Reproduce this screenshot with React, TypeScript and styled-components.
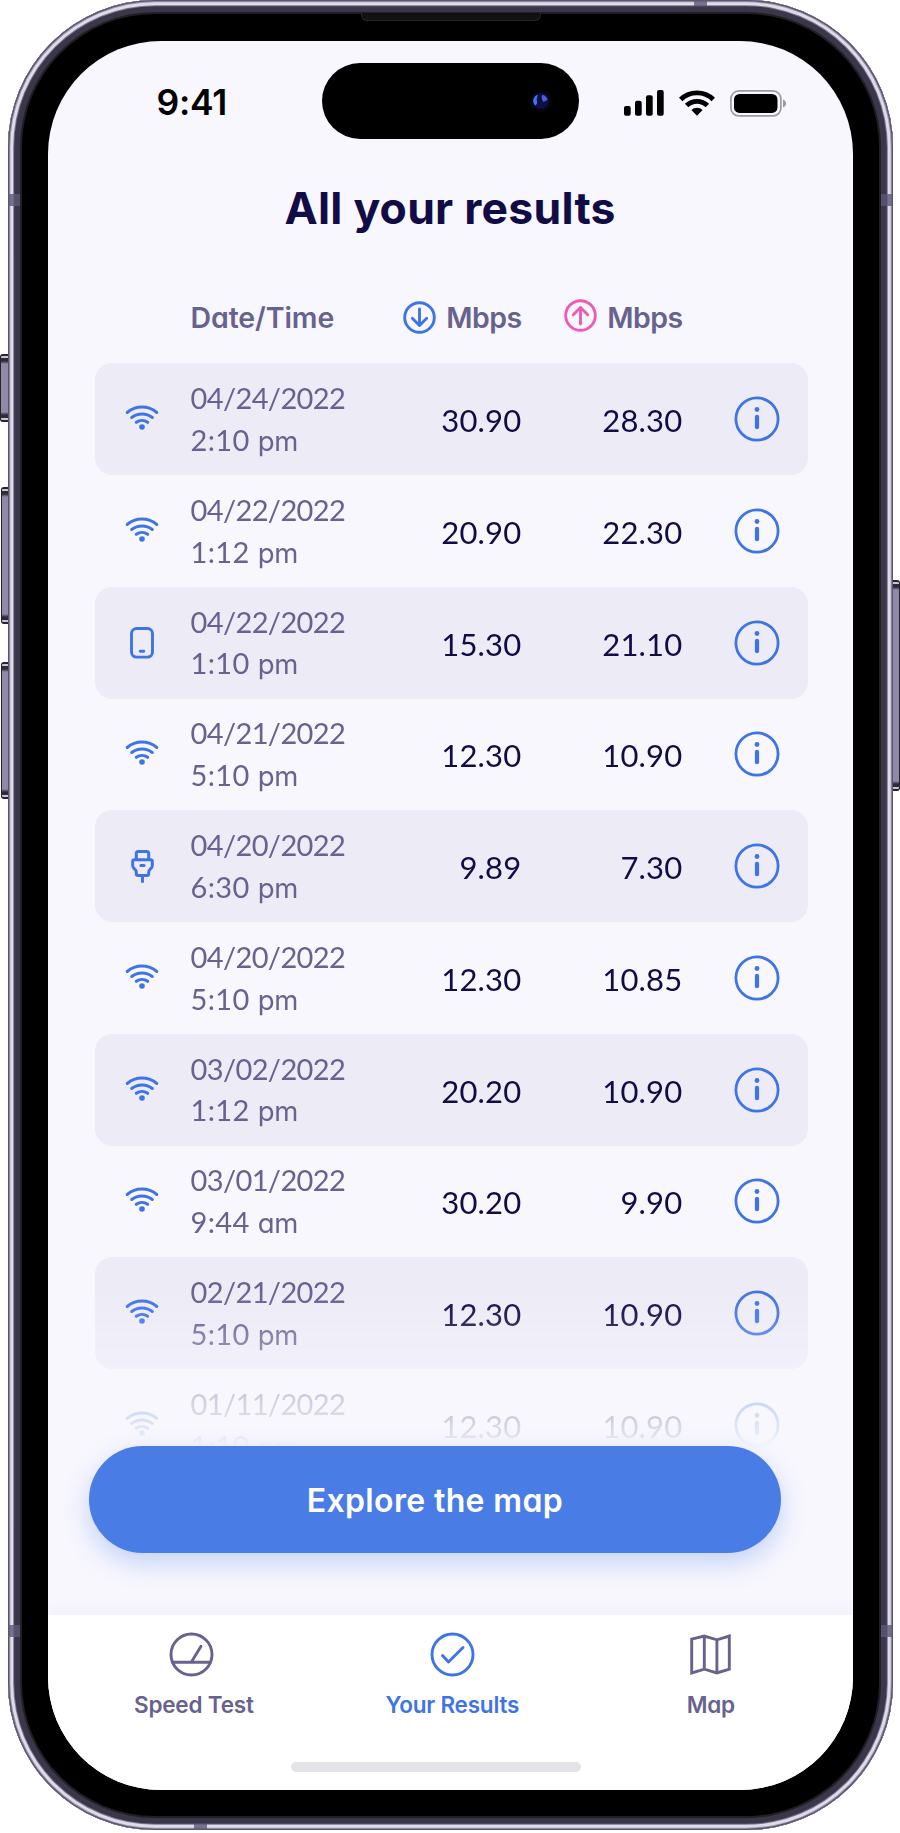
import React from "react";
import styled, { createGlobalStyle, css } from "styled-components";

const BLUE = "#3f74e6";
const PINK = "#ea5cb6";
const MUTED = "#68628f";
const INK = "#120c46";

const GlobalStyle = createGlobalStyle`
  *, *::before, *::after { box-sizing: border-box; }
  body { margin: 0; background: #fff; }
`;

const wordFont = css`
  font-family: "Inter", "Lato", sans-serif;
  font-feature-settings: "cv11" 1;
`;

const Stage = styled.div`
  position: relative;
  width: 900px;
  height: 1833px;
  padding: 0 7px 0 7.5px;
  overflow: hidden;
  background: #fff;
`;

const SideButton = styled.i<{ $side: "left" | "right"; $top: number; $height: number; $width?: number }>`
  position: absolute;
  ${(p) => p.$side}: ${(p) => 8 - (p.$width ?? 7)}px;
  top: ${(p) => p.$top}px;
  width: ${(p) => p.$width ?? 7}px;
  height: ${(p) => p.$height}px;
  border-radius: ${(p) => (p.$side === "left" ? "3px 0 0 3px" : "0 3px 3px 0")};
  border: solid #26232f;
  border-width: ${(p) => (p.$side === "left" ? "2px 0 2px 1.5px" : "2px 1.5px 2px 0")};
  background: linear-gradient(#c9c5d8 0 1.5px, #2e2a3a 2px 5px, #8f8aa8 8px calc(100% - 8px), #2e2a3a calc(100% - 5px) calc(100% - 2px), #c9c5d8 0);
`;

const Frame = styled.div`
  position: relative;
  height: 1830px;
  padding: 41.3px 40px 40.3px 40.8px;
  border-radius: 147px;
  background: #000;
  box-shadow:
    inset 0 0 0 1.3px #5a556d,
    inset 0 0 0 2.3px #9c97ae,
    inset 0 0 0 5.2px #dfdbe8,
    inset 0 0 0 6.2px #7c778f,
    inset 0 0 0 12px #3b364a,
    inset 0 0 0 14px #202022;
`;

const Band = styled.i<{ $edge: "left" | "right" | "top" | "bottom"; $at: number }>`
  position: absolute;
  ${(p) => p.$edge}: 0;
  ${(p) =>
    p.$edge === "left" || p.$edge === "right"
      ? `top: ${p.$at}px; width: 12px; height: 12px;`
      : `left: ${p.$at}px; width: 13px; height: 6px;`}
  background: #5d5775;
  opacity: 0.8;
`;

const Earpiece = styled.i`
  position: absolute;
  top: 13px;
  left: 353px;
  width: 180px;
  height: 8px;
  border: 1px solid #262626;
  border-top: 0;
  border-radius: 0 0 6px 6px;
  background: #111;
`;

const Screen = styled.div`
  height: 100%;
  display: flex;
  flex-direction: column;
  border-radius: 113px;
  overflow: hidden;
  background: #f8f7fe;
`;

const StatusBar = styled.header`
  height: 118.7px;
  flex: none;
  display: flex;
  align-items: flex-start;
  padding: 22px 66px 0 108.2px;
`;

const Clock = styled.time`
  ${wordFont}
  width: 165.5px;
  padding-top: 19px;
  font-size: 35.5px;
  line-height: 42px;
  font-weight: 600;
  letter-spacing: -0.3px;
  color: #000;
`;

const Island = styled.div`
  width: 257.5px;
  height: 75.5px;
  display: flex;
  align-items: center;
  justify-content: flex-end;
  padding: 0 26px 1px 0;
  border-radius: 38px;
  background: #000;
`;

const Indicators = styled.div`
  display: flex;
  gap: 15px;
  margin-left: 44.5px;
  padding-top: 26.5px;
`;

const Title = styled.h1`
  ${wordFont}
  font-weight: 700;
  font-size: 44.5px;
  line-height: 54px;
  letter-spacing: 0.25px;
  color: ${INK};
  text-align: center;
  white-space: nowrap;
  margin: 21.5px 1px 0 0;
  flex: none;
`;

const columns = css`
  display: grid;
  grid-template-columns: 95.5px 152.5px 178.5px 161px 125.500px;
  align-items: center;
`;

const TableHead = styled.div`
  ${columns}
  ${wordFont}
  flex: none;
  width: 713px;
  height: 40px;
  margin: 62.5px 0 25.3px 46.7px;
  font-size: 28.5px;
  line-height: 36px;
  font-weight: 600;
  letter-spacing: -0.1px;
  color: ${MUTED};
`;

const HeadUnit = styled.span<{ $lift?: number }>`
  display: flex;
  align-items: center;
  justify-content: flex-end;
  gap: 10px;
  letter-spacing: -0.6px;
  svg { margin-top: ${(p) => -(p.$lift ?? 0)}px; }
`;

const Results = styled.div`
  flex: none;
  width: 713px;
  height: 1117.5px;
  margin: 0 0 -35px 46.7px;
  overflow: hidden;
  mask-image: linear-gradient(#000 0 925px, rgba(0, 0, 0, 0.9) 955px, rgba(0, 0, 0, 0.6) 1000px, rgba(0, 0, 0, 0.28) 1035px, rgba(0, 0, 0, 0.1) 1070px, transparent 1084px);
`;

const Row = styled.div<{ $shaded: boolean }>`
  ${columns}
  height: 111.75px;
  border-radius: 17px;
  background: ${(p) => (p.$shaded ? "#edebf6" : "transparent")};
`;

const IconCell = styled.span<{ $dy?: number }>`
  display: flex;
  justify-content: center;
  padding: 0 1px ${(p) => p.$dy ?? 0}px 0;
`;

const InfoCell = styled.span`
  display: flex;
  justify-content: flex-end;
  padding-right: 28px;
`;

const Stamp = styled.span`
  font-family: "Lato", sans-serif;
  font-size: 29px;
  line-height: 41.6px;
  padding-top: 1.2px;
  letter-spacing: -0.6px;
  white-space: pre;
  color: ${MUTED};
`;

const ClockPart = styled.span`
  letter-spacing: 0.4px;
`;

const Meridiem = styled.span`
  ${wordFont}
  font-size: 27.5px;
  font-weight: 400;
  letter-spacing: -0.1px;
`;

const Speed = styled.span`
  font-family: "Lato", sans-serif;
  font-size: 31px;
  line-height: 40px;
  padding-top: 2px;
  letter-spacing: 0.2px;
  text-align: right;
  color: ${INK};
`;

const Explore = styled.button`
  ${wordFont}
  position: relative;
  flex: none;
  width: 692.5px;
  height: 107.7px;
  margin-left: 40.4px;
  padding: 2px 0 0;
  border: 0;
  border-radius: 54px;
  background: #4a7ce5;
  box-shadow: 0 10px 26px rgba(74, 124, 229, 0.3);
  color: #fff;
  font-size: 32px;
  font-weight: 600;
  letter-spacing: 0.35px;
`;

const NavBar = styled.nav`
  flex: none;
  margin-top: auto;
  height: 175px;
  background: #fff;
  box-shadow: 0 -4px 16px rgba(80, 90, 200, 0.06);
  display: flex;
  flex-direction: column;
  align-items: center;
`;

const Tabs = styled.div`
  align-self: stretch;
  height: 146.8px;
  display: grid;
  grid-template-columns: repeat(3, 258.5px);
  padding: 17px 0 0 16.3px;
`;

const Tab = styled.a<{ $active?: boolean; $nudge?: number }>`
  ${wordFont}
  display: flex;
  flex-direction: column;
  align-items: center;
  gap: 13.2px;
  font-size: 22.5px;
  line-height: 30px;
  font-weight: 600;
  letter-spacing: -0.2px;
  color: ${(p) => (p.$active ? BLUE : MUTED)};
  svg { margin-right: ${(p) => p.$nudge ?? 0}px; }
`;

const HomeBar = styled.i`
  width: 290px;
  height: 10.5px;
  margin-right: 29px;
  border-radius: 6px;
  background: #e3e2e7;
`;

type SvgProps = React.SVGProps<SVGSVGElement> & { w: number; h: number };
const Glyph = ({ w, h, children, ...rest }: SvgProps) => (
  <svg width={w} height={h} viewBox={`0 0 ${w} ${h}`} fill="none" stroke={BLUE} strokeWidth={2.9} strokeLinecap="round" strokeLinejoin="round" {...rest}>
    {children}
  </svg>
);

const Camera = () => (
  <svg width="24" height="24" viewBox="0 0 24 24">
    <circle cx="12" cy="12" r="11" fill="#06060a" />
    <circle cx="12" cy="12" r="8" fill="#0f0e48" />
    <path d="M8.500 5.500C4 7.500 3 13 6 16.500c2-.5 2.500-2.500 1.800-5S9 8 8.500 5.500z" fill="#3a78f0" />
    <path d="M13 6c3 0 5 2 5.500 5l-4 2c-2-2-2-5-1.500-7z" fill="#4a5fd0" />
  </svg>
);

const Signal = () => (
  <svg width="40" height="26" viewBox="0 0 40 26">
    <rect x="0" y="16" width="6.700" height="9.700" rx="2" />
    <rect x="11" y="10.700" width="6.700" height="15" rx="2" />
    <rect x="22" y="5.300" width="6.700" height="20.400" rx="2" />
    <rect x="33" y="0" width="6.700" height="25.700" rx="2" />
  </svg>
);

const StatusWifi = () => (
  <svg width="36" height="26" viewBox="0 0 36 26" fill="none" stroke="#000" strokeWidth="4.900">
    <path d="M1.700 9.400a23.500 23.500 0 0 1 32.600 0" />
    <path d="M7.600 15.600a15 15 0 0 1 20.800 0" />
    <path d="M18 25.700l-5.600-5.600a8 8 0 0 1 11.200 0z" fill="#000" stroke="none" />
  </svg>
);

const Battery = () => (
  <svg width="57" height="27" viewBox="0 0 57 27">
    <rect x=".9" y=".9" width="50" height="25" rx="8" fill="none" stroke="#9b9aa0" strokeWidth="1.700" />
    <rect x="4" y="3.900" width="43.500" height="19" rx="5.500" />
    <path d="M53 9.500q3 1.200 3 4t-3 4z" fill="#9b9aa0" />
  </svg>
);

const ArrowCircle = ({ up = false }: { up?: boolean }) => (
  <Glyph w={33} h={33} stroke={up ? PINK : BLUE}>
    <circle cx="16.500" cy="16.500" r="14.800" />
    <path d={up ? "M16.500 25V8.500M9.300 15.800l7.200-7.300 7.200 7.300" : "M16.500 8v16.500M9.300 17.200l7.200 7.300 7.200-7.300"} />
  </Glyph>
);

const WifiIcon = () => (
  <Glyph w={34} h={26} strokeWidth={3}>
    <path d="M2.200 8.500a23 23 0 0 1 29.600 0M6.700 13.500a16.500 16.500 0 0 1 20.600 0M11.300 18.300a9.600 9.600 0 0 1 11.400 0" />
    <circle cx="17" cy="23" r="2.800" fill={BLUE} stroke="none" />
  </Glyph>
);

const PhoneIcon = () => (
  <Glyph w={24} h={32}>
    <rect x="1.500" y="1.500" width="21" height="28.600" rx="5" />
    <path d="M10.300 24.300h3.400" />
  </Glyph>
);

const PlugIcon = () => (
  <Glyph w={23} h={33} strokeWidth={3}>
    <path d="M5.300 9.500V3.600q0-2 2-2h8.400q2 0 2 2v5.900M3.500 9.700h16q1.800 0 1.800 1.800v3.800q0 1.800-1 2.800l-1.800 2q-.8.900-.8 2.200v1.400q0 1.800-1.800 1.800H7.100q-1.800 0-1.800-1.800v-1.400q0-1.300-.8-2.200l-1.800-2q-1-1-1-2.800v-3.800q0-1.800 1.800-1.800zM11.500 25.500v6M9.900 15.500h3.200" />
  </Glyph>
);

const InfoIcon = () => (
  <Glyph w={46} h={46} strokeWidth={2.8}>
    <circle cx="23" cy="23" r="21.100" />
    <path d="M23 20.800v10.400" strokeWidth="4.200" />
    <circle cx="23" cy="13.500" r="2.400" fill={BLUE} stroke="none" />
  </Glyph>
);

const GaugeIcon = () => (
  <Glyph w={45} h={45} stroke={MUTED}>
    <circle cx="22.500" cy="22.500" r="20.500" />
    <path d="M4 30.200h37M22.700 29.500l9.300-15.200" />
  </Glyph>
);

const CheckIcon = () => (
  <Glyph w={45} h={45}>
    <circle cx="22.500" cy="22.500" r="20.500" />
    <path d="M12.500 23.500l6 6.500L33 15.500" />
  </Glyph>
);

const MapIcon = () => (
  <Glyph w={45} h={45} stroke={MUTED} strokeLinejoin="miter" strokeLinecap="butt">
    <path d="M3.700 7.200L16.300 4l12.600 3.800L41.300 4v33.200L28.900 41l-12.600-3.800L3.700 41zM16.300 4v33.200M28.900 7.800V41" />
  </Glyph>
);

const kinds = {
  wifi: { icon: <WifiIcon />, dy: 4 },
  phone: { icon: <PhoneIcon />, dy: 0 },
  plug: { icon: <PlugIcon />, dy: 0 },
};

const results: { kind: keyof typeof kinds; date: string; time: string; half: string; down: string; up: string }[] = [
  { kind: "wifi", date: "04/24/2022", time: "2:10", half: "pm", down: "30.90", up: "28.30" },
  { kind: "wifi", date: "04/22/2022", time: "1:12", half: "pm", down: "20.90", up: "22.30" },
  { kind: "phone", date: "04/22/2022", time: "1:10", half: "pm", down: "15.30", up: "21.10" },
  { kind: "wifi", date: "04/21/2022", time: "5:10", half: "pm", down: "12.30", up: "10.90" },
  { kind: "plug", date: "04/20/2022", time: "6:30", half: "pm", down: "9.89", up: "7.30" },
  { kind: "wifi", date: "04/20/2022", time: "5:10", half: "pm", down: "12.30", up: "10.85" },
  { kind: "wifi", date: "03/02/2022", time: "1:12", half: "pm", down: "20.20", up: "10.90" },
  { kind: "wifi", date: "03/01/2022", time: "9:44", half: "am", down: "30.20", up: "9.90" },
  { kind: "wifi", date: "02/21/2022", time: "5:10", half: "pm", down: "12.30", up: "10.90" },
  { kind: "wifi", date: "01/11/2022", time: "1:10", half: "pm", down: "12.30", up: "10.90" },
];

export default function App() {
  return (
    <Stage>
      <GlobalStyle />
      <SideButton $side="left" $top={354} $height={68} $width={8} />
      <SideButton $side="left" $top={487} $height={137} />
      <SideButton $side="left" $top={662} $height={137} />
      <SideButton $side="right" $top={580} $height={211} $width={8} />
      <Frame>
        <Band $edge="top" $at={686.5} />
        <Band $edge="bottom" $at={186.5} />
        <Band $edge="left" $at={193.5} />
        <Band $edge="right" $at={193.5} />
        <Band $edge="left" $at={1625} />
        <Band $edge="right" $at={1625} />
        <Earpiece />
        <Screen>
          <StatusBar>
            <Clock>9:41</Clock>
            <Island><Camera /></Island>
            <Indicators>
              <Signal />
              <StatusWifi />
              <Battery />
            </Indicators>
          </StatusBar>
          <Title>All your results</Title>
          <TableHead>
            <span />
            <span>Date/Time</span>
            <HeadUnit><ArrowCircle />Mbps</HeadUnit>
            <HeadUnit $lift={4}><ArrowCircle up />Mbps</HeadUnit>
          </TableHead>
          <Results>
            {results.map((r, i) => (
              <Row key={i} $shaded={i % 2 === 0}>
                <IconCell $dy={kinds[r.kind].dy}>{kinds[r.kind].icon}</IconCell>
                <Stamp>
                  {r.date}{"\n"}<ClockPart>{r.time} </ClockPart><Meridiem>{r.half}</Meridiem>
                </Stamp>
                <Speed>{r.down}</Speed>
                <Speed>{r.up}</Speed>
                <InfoCell><InfoIcon /></InfoCell>
              </Row>
            ))}
          </Results>
          <Explore>Explore the map</Explore>
          <NavBar>
            <Tabs>
              <Tab $nudge={4}><GaugeIcon />Speed Test</Tab>
              <Tab $active><CheckIcon />Your Results</Tab>
              <Tab><MapIcon />Map</Tab>
            </Tabs>
            <HomeBar />
          </NavBar>
        </Screen>
      </Frame>
    </Stage>
  );
}
